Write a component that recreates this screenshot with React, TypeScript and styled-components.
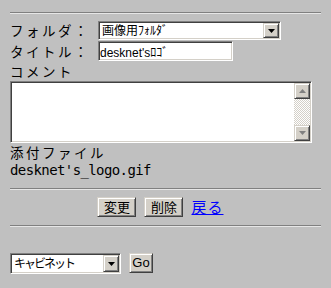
import { createGlobalStyle, css, styled } from 'styled-components';

const jpFont = `"Noto Sans CJK JP", "DejaVu Sans", sans-serif`;

const GlobalStyle = createGlobalStyle`
  html, body {
    margin: 0;
    padding: 0;
    background: #c0c0c0;
  }
  body {
    font-family: ${jpFont};
  }
`;

const sunken = css`
  border: 1px solid;
  border-color: #808080 #ffffff #ffffff #808080;
  box-shadow: inset 1px 1px #404040, inset -1px -1px #d4d0c8;
`;

const raised = css`
  border: 1px solid;
  border-color: #d4d0c8 #404040 #404040 #d4d0c8;
  box-shadow: inset 1px 1px #ffffff, inset -1px -1px #808080;
`;

// full-width glyphs drawn a bit smaller but kept on a 16px pitch
const jpText = css`
  font-family: ${jpFont};
  font-size: 13.5px;
  letter-spacing: 2.5px;
  color: #000;
`;

const Page = styled.div`
  width: 331px;
  height: 288px;
  box-sizing: border-box;
  padding: 12px 10px 0;
  overflow: hidden;
`;

const Rule = styled.hr<{ $top: number }>`
  margin: ${(p) => p.$top}px 0 0;
  height: 0;
  border: 0;
  border-top: 1px solid #808080;
  border-bottom: 1px solid #e6e6e6;
`;

const FormGrid = styled.div`
  display: grid;
  grid-template-columns: 88px auto;
  row-gap: 1px;
  margin-top: 7px;
  align-items: center;
`;

const Label = styled.div`
  ${jpText}
  line-height: 19px;
  white-space: nowrap;
`;

const WideLabel = styled(Label)`
  grid-column: 1 / 3;
  line-height: 18px;
`;

const SelectBox = styled.div<{ $width: number; $height: number }>`
  display: flex;
  width: ${(p) => p.$width}px;
  height: ${(p) => p.$height}px;
  box-sizing: border-box;
  padding: 1px;
  background: #fff;
  ${sunken}
`;

const SelectField = styled.select`
  appearance: none;
  flex: 1;
  min-width: 0;
  margin: 0;
  padding: 0 2px;
  border: 0;
  outline: 0;
  background: transparent;
  color: #000;
  font-family: "Liberation Sans", ${jpFont};
  font-size: 12px;
`;

const NarrowSelectField = styled(SelectField)`
  letter-spacing: -2px;
`;

const DropButton = styled.span`
  flex: none;
  width: 16px;
  box-sizing: border-box;
  display: flex;
  align-items: center;
  justify-content: center;
  background: #d4d0c8;
  ${raised}
`;

const TextInput = styled.input`
  width: 135px;
  height: 20px;
  box-sizing: border-box;
  margin: 0;
  padding: 0 1px;
  background: #fff;
  outline: 0;
  color: #000;
  font-family: "Liberation Sans", ${jpFont};
  font-size: 12px;
  ${sunken}
`;

const MemoBox = styled.div`
  grid-column: 1 / 3;
  display: flex;
  width: 302px;
  height: 62px;
  box-sizing: border-box;
  padding: 1px;
  background: #fff;
  ${sunken}
`;

const MemoArea = styled.textarea`
  flex: 1;
  margin: 0;
  padding: 1px 2px;
  border: 0;
  outline: 0;
  resize: none;
  overflow: hidden;
  background: transparent;
  font-family: ${jpFont};
  font-size: 12px;
`;

const ScrollTrack = styled.div`
  flex: none;
  width: 16px;
  display: flex;
  flex-direction: column;
  justify-content: space-between;
  background: repeating-conic-gradient(#d4d0c8 0 25%, #ffffff 0 50%) 0 0 / 2px 2px;
`;

const ScrollButton = styled.span`
  height: 16px;
  box-sizing: border-box;
  display: flex;
  align-items: center;
  justify-content: center;
  background: #d4d0c8;
  ${raised}
`;

const TextLine = styled.div`
  ${jpText}
  line-height: 18px;
`;

const FileName = styled.div`
  font-family: "DejaVu Sans Mono", monospace;
  font-size: 14px;
  letter-spacing: -0.6px;
  line-height: 18px;
  color: #000;
`;

const ButtonRow = styled.div`
  display: flex;
  align-items: center;
  justify-content: center;
  gap: 8px;
  padding-right: 10px;
  margin-top: 7px;
  height: 20px;
`;

const PushButton = styled.button<{ $width: number }>`
  width: ${(p) => p.$width}px;
  height: 20px;
  box-sizing: border-box;
  margin: 0;
  padding: 0;
  background: #d4d0c8;
  color: #000;
  font-family: ${jpFont};
  font-size: 13px;
  line-height: 16px;
  ${raised}
`;

const GoButton = styled(PushButton)`
  font-family: "Liberation Sans", Arial, sans-serif;
  font-size: 13px;
`;

const BackLink = styled.a`
  font-family: ${jpFont};
  font-size: 15px;
  letter-spacing: 1px;
  color: #0000ff;
  line-height: 18px;
  text-decoration: underline;
`;

const JumpRow = styled.div`
  display: flex;
  align-items: flex-start;
  gap: 8px;
  margin-top: 26px;
`;

const Arrow = ({ up, color }: { up?: boolean; color: string }) => (
  <svg width="7" height="4" viewBox="0 0 7 4">
    <polygon points={up ? '0,4 7,4 3.5,0' : '0,0 7,0 3.5,4'} fill={color} />
  </svg>
);

export default function App() {
  return (
    <>
      <GlobalStyle />
      <Page>
        <Rule $top={0} />
        <FormGrid>
          <Label>フォルダ：</Label>
          <SelectBox $width={183} $height={19}>
            <SelectField defaultValue="img">
              <option value="img">画像用ﾌｫﾙﾀﾞ</option>
            </SelectField>
            <DropButton>
              <Arrow color="#000" />
            </DropButton>
          </SelectBox>
          <Label>タイトル：</Label>
          <TextInput defaultValue="desknet'sﾛｺﾞ" />
          <WideLabel>コメント</WideLabel>
          <MemoBox>
            <MemoArea />
            <ScrollTrack>
              <ScrollButton>
                <Arrow up color="#808080" />
              </ScrollButton>
              <ScrollButton>
                <Arrow color="#808080" />
              </ScrollButton>
            </ScrollTrack>
          </MemoBox>
        </FormGrid>
        <TextLine>添付ファイル</TextLine>
        <FileName>desknet's_logo.gif</FileName>
        <Rule $top={9} />
        <ButtonRow>
          <PushButton $width={39}>変更</PushButton>
          <PushButton $width={39}>削除</PushButton>
          <BackLink href="#">戻る</BackLink>
        </ButtonRow>
        <Rule $top={8} />
        <JumpRow>
          <SelectBox $width={111} $height={21}>
            <NarrowSelectField defaultValue="cab">
              <option value="cab">キャビネット</option>
            </NarrowSelectField>
            <DropButton>
              <Arrow color="#000" />
            </DropButton>
          </SelectBox>
          <GoButton $width={24}>Go</GoButton>
        </JumpRow>
      </Page>
    </>
  );
}
